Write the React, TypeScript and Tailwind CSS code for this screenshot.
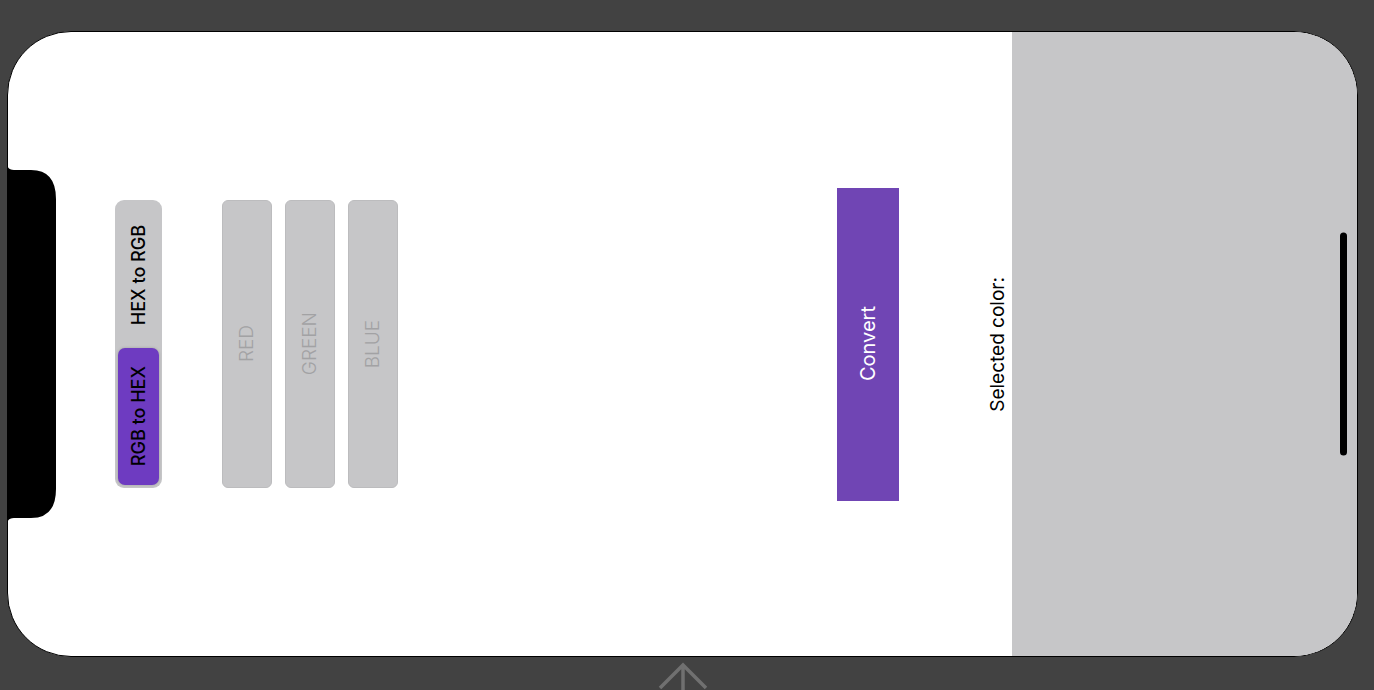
import React from 'react';

const font = { fontFamily: 'Inter, "Liberation Sans", sans-serif' };

const VText: React.FC<{ children: React.ReactNode; className?: string }> = ({ children, className = '' }) => (
  <span className={`[writing-mode:vertical-rl] rotate-180 whitespace-nowrap ${className}`}>{children}</span>
);

const Segmented: React.FC = () => (
  <div className="w-[47px] h-[288px] rounded-[9px] bg-[#c6c6c8] p-[3px] flex flex-col">
    <div className="h-[145px] flex items-center justify-center">
      <VText className="text-[18px] font-medium text-black">HEX to RGB</VText>
    </div>
    <div className="flex-1 flex items-center justify-center rounded-[7px] bg-[#6e3bc1] shadow-[0_0_3px_rgba(0,0,0,0.2)]">
      <VText className="text-[18px] font-medium text-black">RGB to HEX</VText>
    </div>
  </div>
);

const Field: React.FC<{ placeholder: string }> = ({ placeholder }) => (
  <div className="w-[50px] h-[288px] rounded-[6px] bg-[#c6c6c8] border border-[#bcbcbe] flex items-center justify-center">
    <VText className="text-[19px] font-light text-[#a2a2a4]">{placeholder}</VText>
  </div>
);

const Notch: React.FC = () => (
  <svg className="absolute left-[-1px] top-[131px]" width="50" height="362" viewBox="0 0 50 362">
    <path
      d="M0 0 Q0 7 7 7 L24 7 Q49 7 49 36 L49 326 Q49 355 24 355 L7 355 Q0 355 0 362 Z"
      fill="#000"
    />
  </svg>
);

export default function App() {
  return (
    <div className="w-[1374px] h-[690px] bg-[#424242] overflow-hidden" style={font}>
      <div className="pt-[31px] pl-[7px]">
        <div className="relative w-[1351px] h-[626px] rounded-[64px] border border-black overflow-hidden bg-white flex">
          <div className="w-[1004px] flex items-center">
            <div className="ml-[107px]">
              <Segmented />
            </div>
            <div className="ml-[60px] flex gap-[13px]">
              <Field placeholder="RED" />
              <Field placeholder="GREEN" />
              <Field placeholder="BLUE" />
            </div>
            <button className="ml-[439px] w-[62px] h-[313px] bg-[#7045b4] flex items-center justify-center">
              <VText className="text-[20px] text-white">Convert</VText>
            </button>
            <div className="ml-[89px] w-[20px] flex justify-center">
              <VText className="text-[19px] leading-[20px] text-black">Selected color:</VText>
            </div>
          </div>
          <div className="flex-1 bg-[#c6c6c8]" />
          <Notch />
          <div className="absolute right-[10px] top-1/2 -translate-y-1/2 w-[7px] h-[223px] rounded-full bg-black" />
        </div>
      </div>
      <svg className="block ml-[654px] mt-[4px]" width="58" height="29" viewBox="0 0 58 29">
        <path d="M29 3 L29 29 M6 27 L29 4 L52 27" stroke="#707070" strokeWidth="3.5" fill="none" />
      </svg>
    </div>
  );
}
